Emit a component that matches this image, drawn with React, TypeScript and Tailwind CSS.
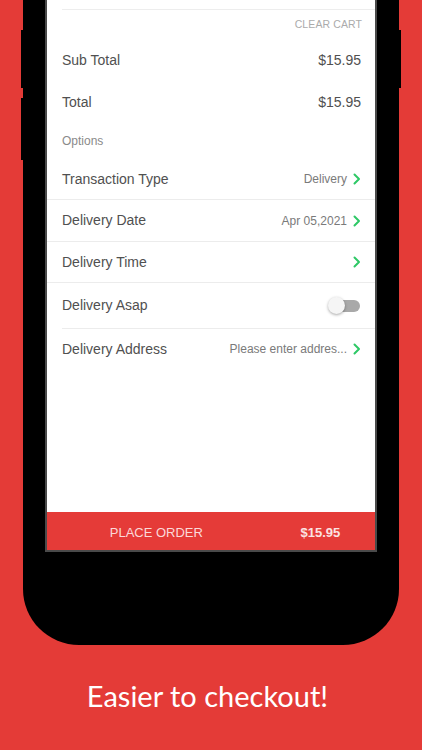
import React from "react";

const Chevron = () => (
  <svg width="8" height="12" viewBox="0 0 8 12" className="shrink-0">
    <polyline points="1.5,1.5 6,6 1.5,10.5" fill="none" stroke="#2ec866" strokeWidth="2" strokeLinecap="round" strokeLinejoin="round" />
  </svg>
);

const OptionRow = ({ label, value, last, inset, h, children }) => (
  <div
    className={`flex items-center justify-between pl-[15px] pr-[14px] ${h} ${
      last ? "" : inset ? "" : "border-b border-[#ececec]"
    }`}
  >
    <span className="text-[14px] text-[#505050]">{label}</span>
    {children ? (
      children
    ) : (
      <div className="flex items-center gap-[6px]">
        {value && <span className="text-[12px] text-[#7a7a7a]">{value}</span>}
        <Chevron />
      </div>
    )}
  </div>
);

export default function App() {
  return (
    <div
      className="relative w-[422px] h-[750px] overflow-hidden bg-[#e43b37]"
      style={{ fontFamily: '"Liberation Sans", Arial, sans-serif' }}
    >
      {/* side buttons */}
      <div className="absolute left-[21px] top-[30px] w-[2px] h-[58px] bg-black" />
      <div className="absolute left-[21px] top-[98px] w-[2px] h-[62px] bg-black" />
      <div className="absolute left-[399px] top-[30px] w-[2px] h-[58px] bg-black" />

      <div className="ml-[23px] w-[376px] h-[645px] bg-black rounded-b-[56px] px-[22px]">
        <div className="h-[552px] bg-white border-x-2 border-b-2 border-[#4a4a4a] flex flex-col">
          <div className="h-[10px] ml-[15px] border-b border-[#ededed]" />
          <div className="h-[29px] flex items-center justify-end pr-[13px] pt-[1px]">
            <span className="text-[10.5px] text-[#ababab] tracking-[0.1px]">CLEAR CART</span>
          </div>
          <div className="h-[42px] flex items-center justify-between pl-[15px] pr-[14px] pt-[1px]">
            <span className="text-[14px] text-[#505050]">Sub Total</span>
            <span className="text-[14px] text-[#505050]">$15.95</span>
          </div>
          <div className="h-[42px] flex items-center justify-between pl-[15px] pr-[14px] pt-[1px]">
            <span className="text-[14px] text-[#505050]">Total</span>
            <span className="text-[14px] text-[#505050]">$15.95</span>
          </div>
          <div className="h-[35px] flex items-center pl-[15px]">
            <span className="text-[12px] text-[#8a8a8a]">Options</span>
          </div>
          <OptionRow label="Transaction Type" value="Delivery" h="h-[42px] pt-[1px]" />
          <OptionRow label="Delivery Date" value="Apr 05,2021" h="h-[42px]" />
          <OptionRow label="Delivery Time" h="h-[41px]" />
          <OptionRow label="Delivery Asap" h="h-[45px]" inset>
            <div className="relative w-[32px] h-[17px] mr-[1px]">
              <div className="absolute right-0 top-[3px] w-[26px] h-[12px] rounded-full bg-[#a9a9a9]" />
              <div className="absolute left-0 top-0 w-[17px] h-[17px] rounded-full bg-[#f5f5f5] shadow-[0_1px_3px_rgba(0,0,0,0.35)]" />
            </div>
          </OptionRow>
          <div className="ml-[15px] border-b border-[#ececec]" />
          <OptionRow label="Delivery Address" value="Please enter addres..." h="h-[40px]" last />
          <div className="flex-1" />
          <div className="h-[38px] bg-[#e53b38] flex items-center pt-[3px]">
            <div className="flex-[2] text-center text-[13px] text-[#fbd9d8]">PLACE ORDER</div>
            <div className="flex-1 text-center text-[13px] font-bold text-[#fbe3e2]">$15.95</div>
          </div>
        </div>
      </div>

      <div
        className="mt-[32px] pr-[7px] text-center text-white text-[29px] leading-[38px]"
        style={{ fontFamily: 'Lato, "Noto Sans", sans-serif' }}
      >
        Easier to checkout!
      </div>
    </div>
  );
}
